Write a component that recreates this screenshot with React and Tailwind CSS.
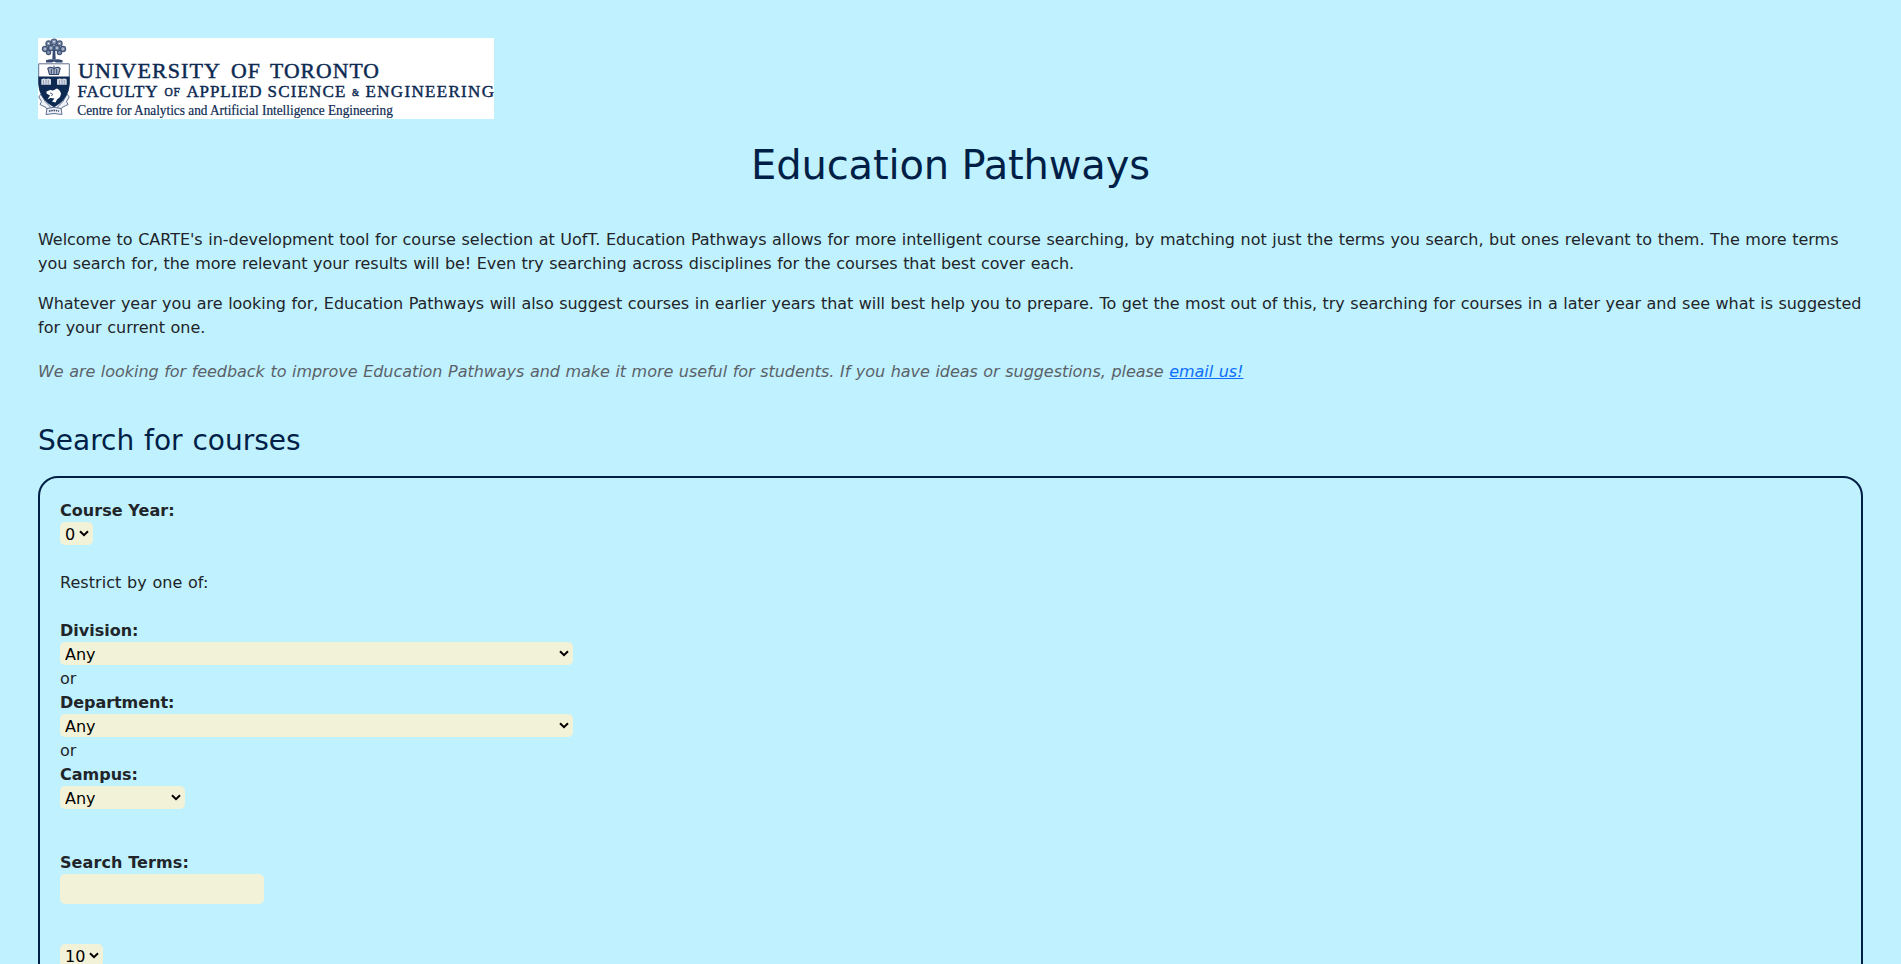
function Logo() {
  return (
    <svg
      className="block h-[81px] w-[456px] bg-white"
      viewBox="0 0 456 81"
      role="img"
      aria-label="University of Toronto"
    >
      {/* tree crest */}
      <g fill="#8290ab" stroke="#41557a" strokeWidth="1.2">
        <circle cx="16" cy="4" r="3" />
        <circle cx="10.5" cy="5.5" r="2.6" />
        <circle cx="21.5" cy="5.5" r="2.6" />
        <circle cx="7" cy="11" r="2.6" />
        <circle cx="13" cy="10" r="2.6" />
        <circle cx="19" cy="10" r="2.6" />
        <circle cx="25" cy="11" r="2.6" />
        <circle cx="10.5" cy="14.5" r="2.1" />
        <circle cx="21.5" cy="14.5" r="2.1" />
      </g>
      <g fill="#fff">
        <circle cx="16" cy="3.5" r=".8" />
        <circle cx="10.5" cy="5.5" r=".7" />
        <circle cx="21.5" cy="5.5" r=".7" />
        <circle cx="7" cy="11" r=".7" />
        <circle cx="13" cy="10" r=".7" />
        <circle cx="19" cy="10" r=".7" />
        <circle cx="25" cy="11" r=".7" />
      </g>
      <g fill="#34496f">
        <path d="M14.8 12h2.4l.5 9.5h-3.4z" />
        <path d="M8 22.3Q12 20.5 16 21.5Q20 20.5 24.5 22.3V24.5H18L16 23.5L14 24.5H8z" />
      </g>
      {/* ribbon */}
      <g fill="#eef1f6" stroke="#5d7092" strokeWidth="1">
        <path d="M3 56L.8 59L3.5 63.5L2 66.5L8 69.5L10.5 74L12.5 69Q6 64 3 56z" />
        <path d="M29 56L31.2 59L28.5 63.5L30 66.5L24 69.5L21.5 74L19.5 69Q26 64 29 56z" />
        <path d="M9 70.5Q16 68 23 70.5L24 76.5Q16 74.5 8 76.5z" />
      </g>
      <path d="M11 73.2Q16 71.6 21 73.2" fill="none" stroke="#34496f" strokeWidth="1.6" strokeDasharray="1.5 .8" />
      {/* shield */}
      <path d="M.7 25.8H31.3V45Q31 61 16 69Q1 61 .7 45z" fill="#fff" stroke="#5d7092" strokeWidth="1" />
      <path d="M.4 38.5H31.6V45Q31 61 16 69Q1 61 .4 45z" fill="#0d2a52" />
      {/* crown */}
      <path d="M11.5 36.5L9.8 30.5Q12 28.3 16 30.5Q20 28.3 22.2 30.5L20.5 36.5z" fill="#a8b3c6" stroke="#34496f" strokeWidth="1.1" />
      <path d="M16 27.5V36M13.3 31V36M18.7 31V36" fill="none" stroke="#34496f" strokeWidth="1" />
      {/* books */}
      <g fill="#d3dae5">
        <path d="M3.3 41.2Q6 39.8 8 41Q10 39.8 13 41.2V46.8H3.3z" />
        <path d="M19 41.2Q22 39.8 24 41Q26 39.8 28.7 41.2V46.8H19z" />
      </g>
      <path d="M8 41.5V46.5M24 41.5V46.5M5.5 42V46.5M10.3 42V46.5M21.5 42V46.5M26.3 42V46.5" stroke="#6e7f9c" strokeWidth=".6" />
      {/* beaver */}
      <path d="M8.5 53.5L12 52L15 52.5L19 50.5Q22.5 52 23 56L22 59L19 61.5L17.5 64.5L14 63.5L16.5 60.5L12.5 60L9.5 61.5L12 57.5L8.5 55.5z" fill="#fff" />
      <path d="M12 54.8L14.5 56L13.5 58" stroke="#0d2a52" strokeWidth=".7" fill="none" />

      <g fill="#0d2a52" stroke="#0d2a52" strokeWidth=".45" fontFamily="'Liberation Serif', serif">
        <text x="40" y="39.5" fontSize="20.5" letterSpacing="1" textLength="143" lengthAdjust="spacingAndGlyphs">UNIVERSITY</text>
        <text x="193" y="39.5" fontSize="20.5" letterSpacing="1" textLength="30" lengthAdjust="spacingAndGlyphs">OF</text>
        <text x="232" y="39.5" fontSize="20.5" letterSpacing="1" textLength="110" lengthAdjust="spacingAndGlyphs">TORONTO</text>
        <text x="39.5" y="58.7" fontSize="17" textLength="80" lengthAdjust="spacing">FACULTY</text>
        <text x="126.5" y="58" fontSize="11.5" textLength="15.5" lengthAdjust="spacing">OF</text>
        <text x="148.5" y="58.7" fontSize="17" textLength="75" lengthAdjust="spacing">APPLIED</text>
        <text x="229.5" y="58.7" fontSize="17" textLength="78" lengthAdjust="spacing">SCIENCE</text>
        <text x="314" y="58" fontSize="9.5" textLength="7" lengthAdjust="spacingAndGlyphs">&amp;</text>
        <text x="327.5" y="58.7" fontSize="17" textLength="128.5" lengthAdjust="spacing">ENGINEERING</text>
        <text x="39.3" y="77" fontSize="14.3" strokeWidth=".2" textLength="315.5" lengthAdjust="spacingAndGlyphs">
          Centre for Analytics and Artificial Intelligence Engineering
        </text>
      </g>
    </svg>
  );
}

function Select({ value, className }) {
  return (
    <div className={`grid h-[23px] ${className}`}>
      <select
        defaultValue={value}
        className="col-start-1 row-start-1 h-[23px] w-full appearance-none rounded-[5px] bg-[#f2f2d9] pt-0.5 pl-[5px] text-base leading-[21px] text-black outline-none"
      >
        <option>{value}</option>
      </select>
      <svg
        className="pointer-events-none col-start-1 row-start-1 mt-2 mr-1 h-[7px] w-[10px] justify-self-end"
        viewBox="0 0 10 7"
        fill="none"
        stroke="#000"
        strokeWidth="2"
      >
        <path d="M1 1.2L5 5.2L9 1.2" />
      </svg>
    </div>
  );
}

function Label({ children, className = "" }) {
  return <label className={`block h-6 pt-px font-bold ${className}`}>{children}</label>;
}

export default function App() {
  return (
    <div className="h-screen overflow-hidden bg-[#c0f1ff] p-[38px] font-['DejaVu_Sans',sans-serif] text-base leading-6 text-[#212529]">
      <Logo />
      <h1 className="mt-[22px] text-center text-[40px] leading-[48px] tracking-[-0.15px] text-[#001f47]">
        Education Pathways
      </h1>

      <div className="mt-[39px] whitespace-nowrap [word-spacing:0.54px]">
        <p>
          <span className="block tracking-[-0.03px]">
            Welcome to CARTE's in-development tool for course selection at UofT. Education Pathways allows for more intelligent course searching, by matching not just the terms you search, but ones relevant to them. The more terms
          </span>
          <span className="block tracking-[-0.06px]">
            you search for, the more relevant your results will be! Even try searching across disciplines for the courses that best cover each.
          </span>
        </p>
        <p className="mt-4">
          <span className="block tracking-[-0.05px]">
            Whatever year you are looking for, Education Pathways will also suggest courses in earlier years that will best help you to prepare. To get the most out of this, try searching for courses in a later year and see what is suggested
          </span>
          <span className="block">for your current one.</span>
        </p>
        <p className="mt-5 tracking-[-0.04px] text-[#5a6268] italic">
          We are looking for feedback to improve Education Pathways and make it more useful for students. If you have ideas or suggestions, please{" "}
          <a href="#" className="text-[#0d6efd] underline">email us!</a>
        </p>
      </div>

      <h2 className="mt-10 text-[28px] leading-[34px] text-[#001f47] [word-spacing:0.95px]">Search for courses</h2>

      <form className="mt-[18px] h-[700px] rounded-[20px] border-2 border-[#001f47] p-5">
        <Label className="tracking-[0.05px]">Course Year:</Label>
        <Select value="0" className="w-[33px]" />
        <p className="mt-[25px] h-6 pt-px tracking-[0.05px] [word-spacing:0.54px]">Restrict by one of:</p>
        <Label className="mt-6">Division:</Label>
        <Select value="Any" className="w-[513px]" />
        <p className="mt-px h-6 pt-px">or</p>
        <Label className="tracking-[-0.05px]">Department:</Label>
        <Select value="Any" className="w-[513px]" />
        <p className="mt-px h-6 pt-px">or</p>
        <Label>Campus:</Label>
        <Select value="Any" className="w-[125px]" />
        <Label className="mt-[41px] tracking-[0.1px]">Search Terms:</Label>
        <input type="text" aria-label="Search Terms" className="block h-[30px] w-[204px] rounded-[5px] bg-[#f2f2d9] px-1 outline-none" />
        <Select value="10" className="mt-10 w-[43px]" />
      </form>
    </div>
  );
}
